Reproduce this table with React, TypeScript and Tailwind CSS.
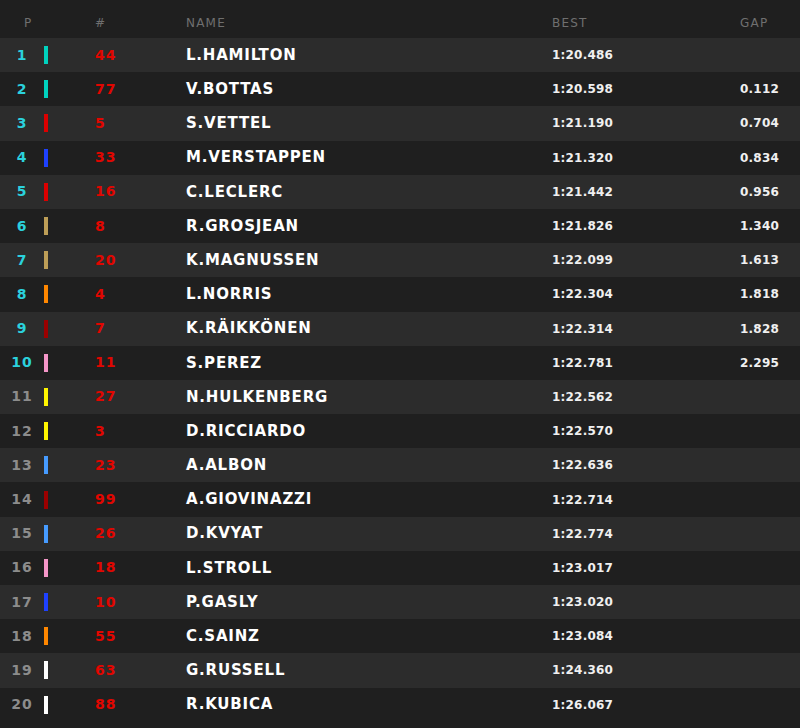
import React from "react";

type Row = { p: number; n: string; name: string; best: string; gap: string; c: string };

const rows: Row[] = [
  { p: 1, n: "44", name: "L.HAMILTON", best: "1:20.486", gap: "", c: "#00d2be" },
  { p: 2, n: "77", name: "V.BOTTAS", best: "1:20.598", gap: "0.112", c: "#00d2be" },
  { p: 3, n: "5", name: "S.VETTEL", best: "1:21.190", gap: "0.704", c: "#dc0000" },
  { p: 4, n: "33", name: "M.VERSTAPPEN", best: "1:21.320", gap: "0.834", c: "#1e41ff" },
  { p: 5, n: "16", name: "C.LECLERC", best: "1:21.442", gap: "0.956", c: "#dc0000" },
  { p: 6, n: "8", name: "R.GROSJEAN", best: "1:21.826", gap: "1.340", c: "#bd9e57" },
  { p: 7, n: "20", name: "K.MAGNUSSEN", best: "1:22.099", gap: "1.613", c: "#bd9e57" },
  { p: 8, n: "4", name: "L.NORRIS", best: "1:22.304", gap: "1.818", c: "#ff8700" },
  { p: 9, n: "7", name: "K.RÄIKKÖNEN", best: "1:22.314", gap: "1.828", c: "#9b0000" },
  { p: 10, n: "11", name: "S.PEREZ", best: "1:22.781", gap: "2.295", c: "#f596c8" },
  { p: 11, n: "27", name: "N.HULKENBERG", best: "1:22.562", gap: "", c: "#fff500" },
  { p: 12, n: "3", name: "D.RICCIARDO", best: "1:22.570", gap: "", c: "#fff500" },
  { p: 13, n: "23", name: "A.ALBON", best: "1:22.636", gap: "", c: "#469bff" },
  { p: 14, n: "99", name: "A.GIOVINAZZI", best: "1:22.714", gap: "", c: "#9b0000" },
  { p: 15, n: "26", name: "D.KVYAT", best: "1:22.774", gap: "", c: "#469bff" },
  { p: 16, n: "18", name: "L.STROLL", best: "1:23.017", gap: "", c: "#f596c8" },
  { p: 17, n: "10", name: "P.GASLY", best: "1:23.020", gap: "", c: "#1e41ff" },
  { p: 18, n: "55", name: "C.SAINZ", best: "1:23.084", gap: "", c: "#ff8700" },
  { p: 19, n: "63", name: "G.RUSSELL", best: "1:24.360", gap: "", c: "#ffffff" },
  { p: 20, n: "88", name: "R.KUBICA", best: "1:26.067", gap: "", c: "#ffffff" },
];

export default function App() {
  return (
    <div
      className="w-[800px] h-[728px] bg-[#1f1f1f] overflow-hidden"
      style={{ fontFamily: '"DejaVu Sans", "Liberation Sans", sans-serif' }}
    >
      <div className="flex items-center h-[38px] pt-[7px] text-[12px] tracking-[1.2px] text-[#6f6f6f]">
        <div className="w-[95px] pl-[24px]">P</div>
        <div className="w-[91px]">#</div>
        <div className="w-[366px]">NAME</div>
        <div className="flex-1">BEST</div>
        <div className="w-[60px]">GAP</div>
      </div>
      {rows.map((r, i) => (
        <div
          key={r.p}
          className={`flex items-center h-[34.2px] ${i % 2 === 0 ? "bg-[#2c2c2c]" : "bg-[#1f1f1f]"}`}
        >
          <div
            className={`w-[44px] text-center text-[14px] font-bold tracking-[1px] ${
              r.p <= 10 ? "text-[#2bd1dd]" : "text-[#8c8c8c]"
            }`}
          >
            {r.p}
          </div>
          <div className="w-[4px] h-[18px]" style={{ backgroundColor: r.c }} />
          <div className="w-[138px] pl-[47px] text-[14px] font-bold tracking-[1px] text-[#e10600]">{r.n}</div>
          <div className="w-[366px] text-[15px] font-bold tracking-[0.8px] text-white">{r.name}</div>
          <div className="flex-1 text-[12px] font-bold tracking-[0.2px] text-[#f0f0f0]">{r.best}</div>
          <div className="w-[100px] pr-[21px] text-right text-[12px] font-bold tracking-[0.2px] text-[#f0f0f0]">
            {r.gap}
          </div>
        </div>
      ))}
    </div>
  );
}
